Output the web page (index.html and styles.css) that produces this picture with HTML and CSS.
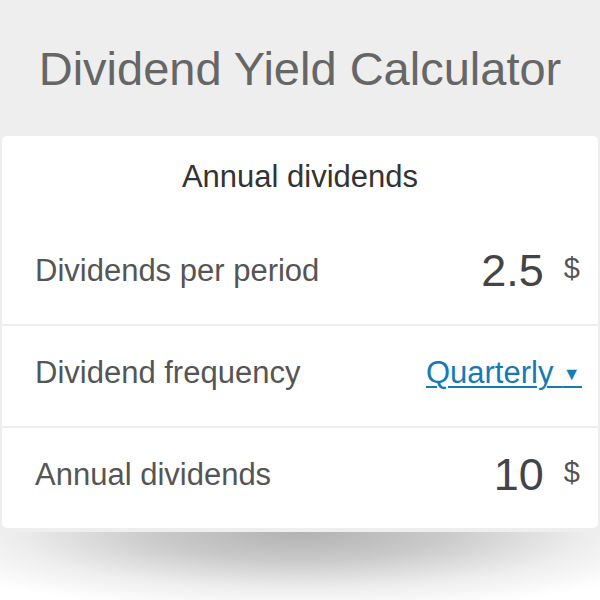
FILE: index.html
```html
<!DOCTYPE html>
<html>
  <head>
    <title>Dividend Yield Calculator</title>
    <link rel="stylesheet" href="styles.css">
  </head>
  <body>
    <div class="calculator">
      <h1 class="title">Dividend Yield Calculator</h1>

      <div class="block first">
        <h2 class="section">Annual dividends</h2>
        <div class="row">
          <span class="label">Dividends per period</span>
          <span class="value">2.5<span class="unit">$</span></span>
        </div>
      </div>

      <div class="block">
        <div class="row">
          <span class="label">Dividend frequency</span>
          <a class="select" href="#">Quarterly&nbsp; <span class="arrow">&#9660;&#8202;</span></a>
        </div>
      </div>

      <div class="block last">
        <div class="row">
          <span class="label">Annual dividends</span>
          <span class="value">10<span class="unit">$</span></span>
        </div>
      </div>
    </div>
    <div class="shadow"></div>
  </body>
</html>
```

FILE: styles.css
```css
body {
  margin: 0;
  padding: 0;
  background-color: #fff;
  font-family: "Liberation Sans", Arial, sans-serif;
  overflow: hidden;
}

.calculator {
  position: relative;
  z-index: 1;
  width: 600px;
  background-color: #eee;
  padding: 0 2px 4px;
  box-sizing: border-box;
}

/* soft drop shadow under the widget */
.shadow {
  height: 80px;
  margin: 0 -20px;
  background: radial-gradient(ellipse 64% 100% at 50% 0, rgba(0, 0, 0, 0.3) 0%, rgba(0, 0, 0, 0.21) 35%, rgba(0, 0, 0, 0.07) 70%, rgba(0, 0, 0, 0) 100%);
}

.title {
  margin: 0;
  height: 136px;
  display: flex;
  align-items: center;
  justify-content: center;
  font-size: 47px;
  font-weight: normal;
  color: #666;
}

.block {
  background-color: #fff;
  margin-bottom: 2px;
}

.block.first {
  border-radius: 5px 5px 0 0;
}

.block.last {
  margin-bottom: 0;
  border-radius: 0 0 5px 5px;
}

.section {
  margin: 0;
  height: 88px;
  padding-bottom: 6px;
  box-sizing: border-box;
  display: flex;
  align-items: center;
  justify-content: center;
  font-size: 31px;
  font-weight: normal;
  color: #333;
}

.row {
  height: 100px;
  padding: 0 16px 6px 33px;
  box-sizing: border-box;
  display: flex;
  align-items: center;
  justify-content: space-between;
}

.label {
  font-size: 31px;
  color: #555;
}

.value {
  font-size: 45px;
  color: #444;
  display: flex;
  align-items: center;
  margin-right: 2px;
}

.unit {
  font-size: 29px;
  color: #555;
  margin-left: 20px;
  position: relative;
  top: -3px;
}

.select {
  font-size: 31px;
  color: #167ab5;
  text-decoration: underline;
  text-decoration-thickness: 2px;
  text-underline-offset: 3px;
  word-spacing: -4px;
}

.arrow {
  font-size: 18px;
  vertical-align: 3px;
}
```
